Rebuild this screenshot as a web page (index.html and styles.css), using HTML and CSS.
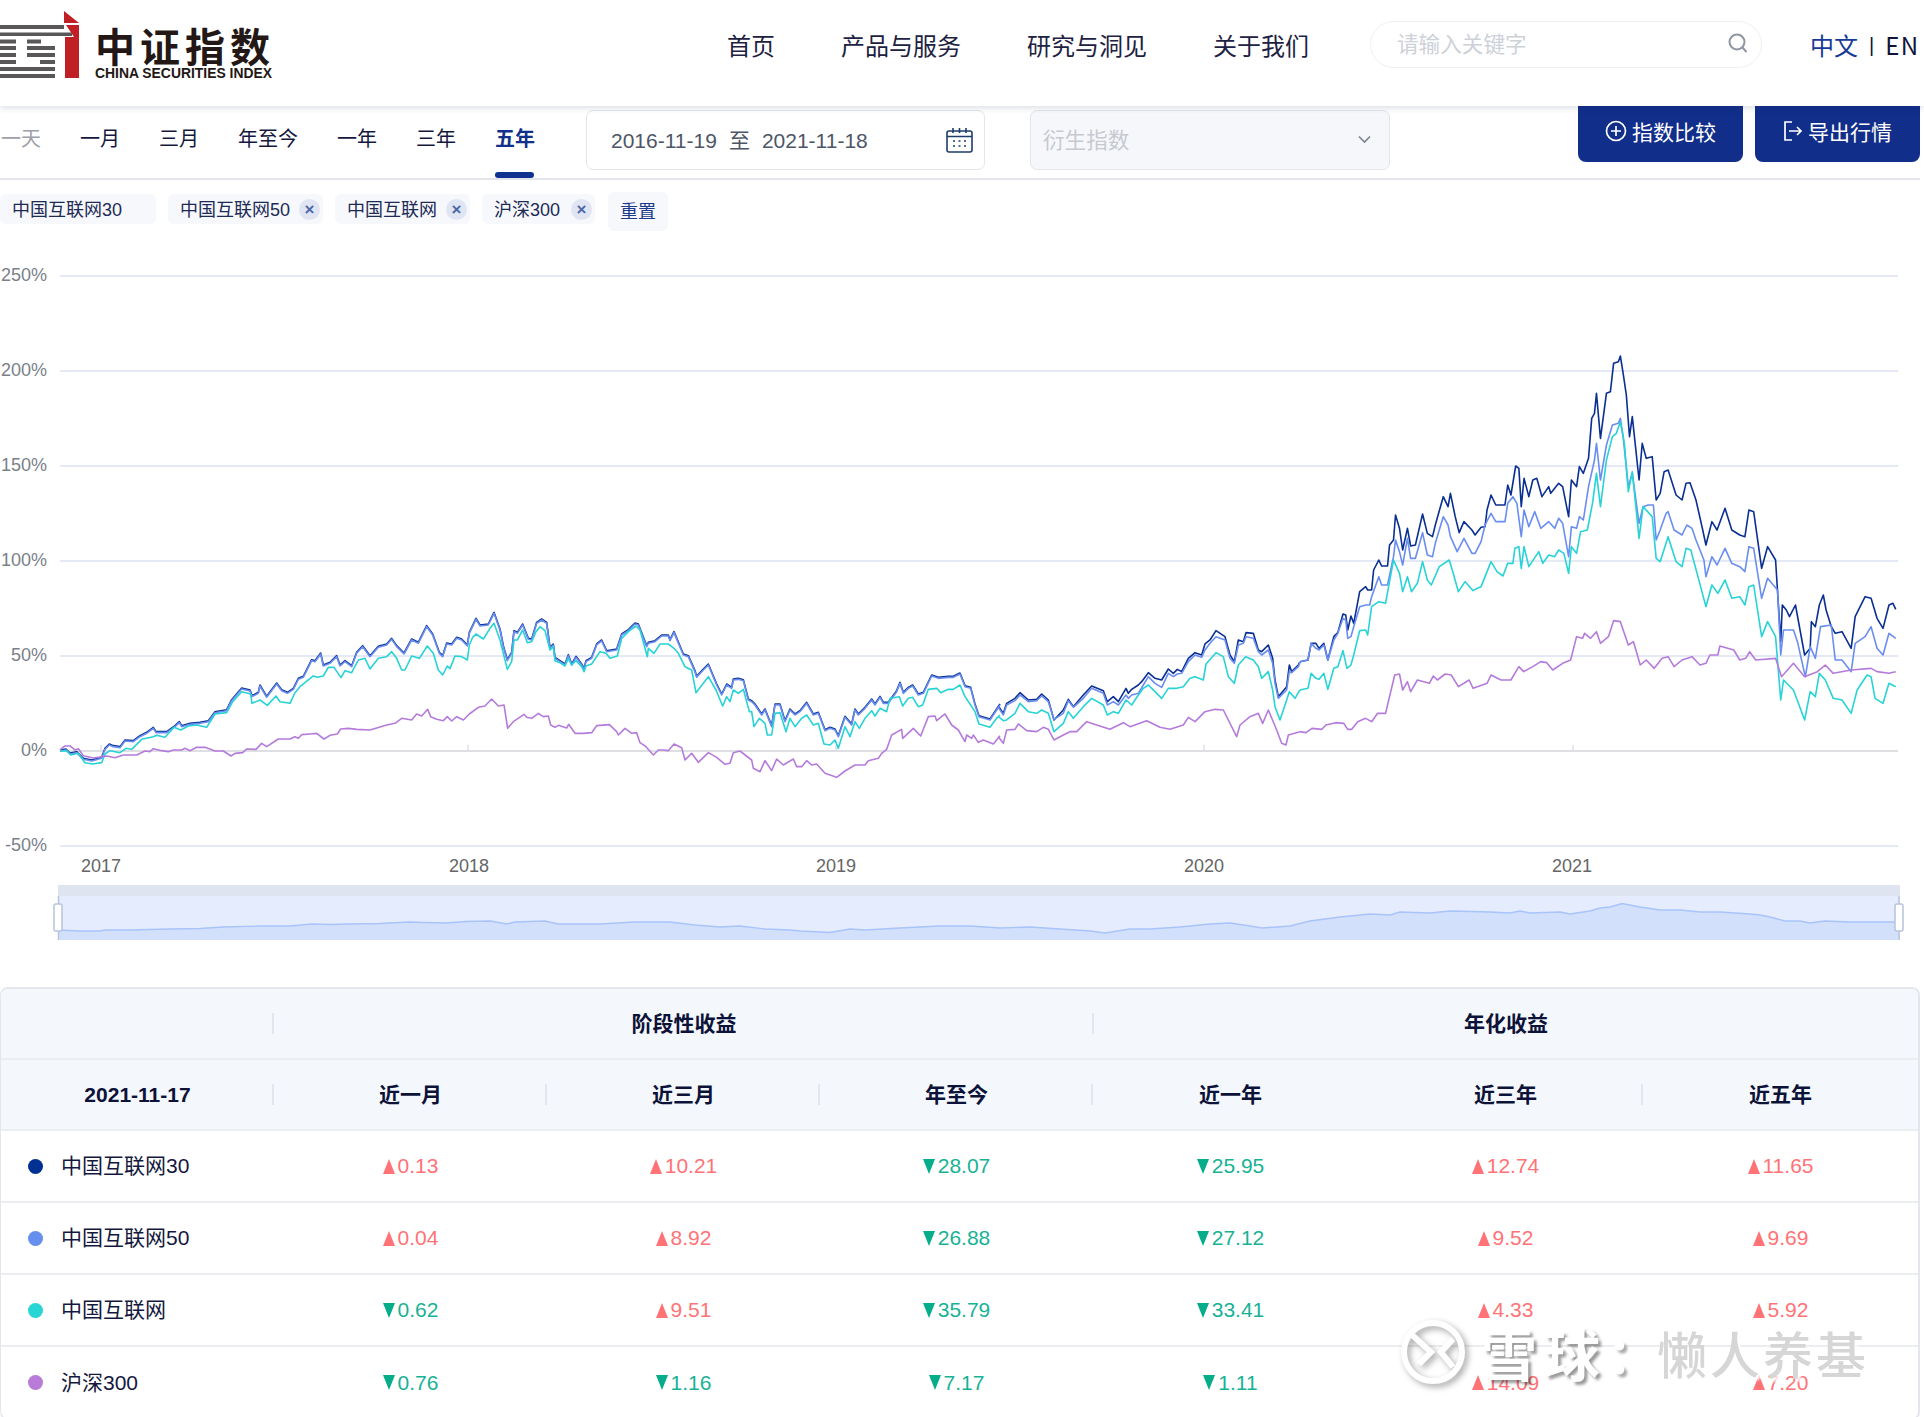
FILE: index.html
```html
<!DOCTYPE html>
<html lang="zh-CN">
<head>
<meta charset="utf-8">
<title>中证指数</title>
<link rel="stylesheet" href="styles.css">
</head>
<body>
<div class="page">
  <header class="topbar">
    <div class="brand">
      <svg class="brand-mark" width="80" height="80" viewBox="0 0 80 80">
        <g class="mark-grey">
          <rect x="0" y="25" width="64" height="4"/><rect x="0" y="32.5" width="72" height="3.5"/>
          <rect x="0" y="39.5" width="16" height="4"/><rect x="27" y="39.5" width="14" height="4"/>
          <rect x="0" y="46" width="16" height="4"/><rect x="27" y="46" width="28" height="4"/>
          <rect x="0" y="53" width="16" height="4"/><rect x="27" y="53" width="28" height="4"/>
          <rect x="0" y="60" width="16" height="4"/><rect x="40" y="60" width="15" height="4"/>
          <rect x="0" y="67" width="55" height="4"/><rect x="0" y="74" width="55" height="4"/>
        </g>
        <polygon class="mark-red" points="64,11 79,23 64,23"/>
        <polygon class="mark-red" points="66,25 79,25 79,78 65,78 65,37 74,37"/>
      </svg>
      <div class="brand-text">
        <div class="brand-cn">中证指数</div>
        <div class="brand-en">CHINA SECURITIES INDEX</div>
      </div>
    </div>
    <nav class="mainnav">
      <a>首页</a><a>产品与服务</a><a>研究与洞见</a><a>关于我们</a>
    </nav>
    <div class="search">
      <span class="search-ph">请输入关键字</span>
      <svg width="22" height="22" viewBox="0 0 22 22" class="search-ic"><circle cx="10" cy="10" r="7.5"/><path d="M15.5 15.5 L19.5 20"/></svg>
    </div>
    <div class="lang"><span class="lang-on">中文</span><span class="lang-sep">|</span><span class="lang-en">EN</span></div>
  </header>

  <section class="toolbar">
    <div class="tabs">
      <a class="tab tab-off">一天</a><a class="tab">一月</a><a class="tab">三月</a><a class="tab">年至今</a><a class="tab">一年</a><a class="tab">三年</a><a class="tab tab-on">五年</a>
    </div>
    <div class="datebox">
      <span>2016-11-19</span><span class="date-to">至</span><span>2021-11-18</span>
      <svg class="cal" width="27" height="26" viewBox="0 0 27 26"><rect x="1" y="4" width="25" height="21" rx="2"/><path d="M1 9.5H26M7 1V6M13.5 1V6M20 1V6"/><path class="cal-dots" d="M7 14h2M12.5 14h2M18 14h2M7 19h2M12.5 19h2M18 19h2"/></svg>
    </div>
    <div class="selectbox">
      <span>衍生指数</span>
      <svg width="13" height="9" viewBox="0 0 13 9" class="chev"><path d="M1 1.5 L6.5 7 L12 1.5"/></svg>
    </div>
    <div class="actions">
      <a class="btn"><svg width="22" height="22" viewBox="0 0 22 22" class="btn-ic"><circle cx="11" cy="11" r="9.5"/><path d="M11 6V16M6 11H16"/></svg>指数比较</a>
      <a class="btn"><svg width="20" height="22" viewBox="0 0 20 22" class="btn-ic"><path d="M9 2H2V20H9"/><path d="M6 11H18M14 7L18 11L14 15"/></svg>导出行情</a>
    </div>
  </section>

  <section class="tags">
    <span class="tag tag-first">中国互联网30</span>
    <span class="tag">中国互联网50<i class="tag-x">×</i></span>
    <span class="tag">中国互联网<i class="tag-x">×</i></span>
    <span class="tag tag-wide">沪深300<i class="tag-x">×</i></span>
    <span class="reset">重置</span>
  </section>

  <svg class="chart" width="1924" height="720" viewBox="0 240 1924 720">
    <defs>
      <polyline id="b8" class="ln" points="30,483 48,480 60,492 80,488 100,508 125,513 155,505 165,478 178,465 190,470 210,473 225,453 250,455 270,440 290,430 310,415 318,428 350,428 375,410 388,398 395,410 420,403 450,400 475,395 495,368 530,362 545,332 575,297 600,303 606,320 625,310 630,288 650,322 680,282 695,302 712,310 730,298 745,268 760,262 785,212 795,215 812,192 820,228 840,220 860,200 870,228 885,215 905,230 920,190 938,170 960,200 985,172 1010,165 1025,148 1040,170 1062,192 1085,150 1105,160 1130,110 1148,135 1168,190 1178,200 1190,162 1205,165 1220,145 1235,150 1252,168 1258,130 1278,88 1290,108 1315,105 1332,70 1350,120"/>
      <polyline id="b9" class="ln" points="0,120 10,170 22,212 35,190 42,125 52,130 68,105 85,148 95,150 110,100 125,90 140,100 150,175 160,165 165,205 180,215 195,225 205,197 215,225 228,202 245,225 252,238 258,215 275,205 290,165 305,153 320,185 350,180 365,135 385,122 405,102 415,105 440,170 445,160 465,155 485,138 505,138 510,152 522,128 550,195 565,200 585,245 590,262 610,240 625,225 650,285 665,315 680,285 695,295 700,270 715,268 730,272 745,330 755,335 765,345 785,375 795,360 815,410 825,345 840,345 855,395 870,360 885,375 900,365 920,340 940,375 955,370 975,422 990,415 1005,420 1015,440 1035,382 1055,405 1065,360 1075,375 1095,355 1115,330 1125,345 1140,322 1150,340 1165,340 1190,305 1200,280 1210,310 1225,295 1238,288 1255,315 1270,310 1295,258 1315,265 1345,262 1360,262 1380,252 1395,290 1412,295 1425,345 1437,380 1470,390 1490,360 1500,345"/>
    </defs>

    <g class="grid">
      <path d="M60 276H1898M60 371H1898M60 466H1898M60 561H1898M60 656H1898M60 846H1898"/>
    </g>
    <path class="zero" d="M60 751H1898"/>
    <path class="ticks" d="M101 745V751M468 745V751M836 745V751M1204 745V751M1573 745V751"/>

    <g class="ylabels">
      <text x="47" y="281">250%</text><text x="47" y="376">200%</text><text x="47" y="471">150%</text><text x="47" y="566">100%</text><text x="47" y="661">50%</text><text x="47" y="756">0%</text><text x="47" y="851">-50%</text>
    </g>
    <g class="xlabels">
      <text x="101" y="872">2017</text><text x="469" y="872">2018</text><text x="836" y="872">2019</text><text x="1204" y="872">2020</text><text x="1572" y="872">2021</text>
    </g>

    <g class="s-dark">
      <use href="#b8" transform="translate(50,589) scale(.33333)"/>
      <use href="#b9" transform="translate(500,589) scale(.33333)"/>
      <polyline class="ln" transform="translate(900,450) scale(.33333)" points="295,768 310,790 320,760 345,745 360,728 385,750 410,748 425,732 445,750 462,810 490,780 505,748 520,770 550,735 575,708 610,722 622,755 640,740 655,755 678,715 685,730 695,718 715,705 725,695 745,668 765,685 785,690 805,657 820,670 832,658 845,665 865,625 885,608 905,615 915,582 930,570 948,542 975,560 990,615 1003,635 1015,570 1030,575 1038,548 1060,550 1075,600 1085,605 1105,585 1118,625 1125,690 1135,740 1160,710 1168,645 1175,665 1195,645 1200,636"/>
      <polyline class="ln" transform="translate(1300,340) scale(.39796,.33333)" points="0,965 20,960 28,910 40,910 48,925 60,910 70,960 85,890 95,878 108,822 115,825 120,870 128,828 135,850 150,755 165,740 170,750 180,750 185,690 198,660 205,678 220,678 225,615 235,600 240,525 250,565 258,630 270,565 278,618 290,615 308,522 320,580 333,590 340,555 360,470 372,500 378,460 390,530 400,578 412,545 432,570 440,585 455,562 465,560 470,510 480,465 492,495 515,495 522,435 530,465 542,378 550,385 556,500 563,415 575,470 585,420 595,415 608,470 625,440 630,460 650,430 660,440 675,530 682,420 695,440 702,380 712,400 725,355 733,235 740,220 745,160 755,295 770,160 780,155 788,70 800,65 805,48 812,100 820,165 828,290 835,230 852,420 860,310 870,355 885,350 895,480 905,460 915,395 925,390 945,465 960,480 970,430 980,428 995,480 1012,570 1020,615 1035,545 1048,570 1068,505 1085,570 1105,585 1118,590 1128,510 1140,515 1160,685 1175,620 1195,660 1208,905 1212,795 1222,810 1230,830 1245,795 1268,945 1282,925 1285,845 1295,860 1305,795 1315,765 1322,810 1335,860 1345,880 1362,875 1385,925 1395,830 1420,770 1435,775 1450,835 1465,865 1480,795 1490,790 1497,808"/>
    </g>
    <g class="s-med">
      <use href="#b8" transform="translate(50,590) scale(.33333)"/>
      <use href="#b9" transform="translate(500,590) scale(.33333)"/>
      <polyline class="ln" transform="translate(900,450) scale(.33333)" points="295,772 310,795 320,765 345,752 360,735 385,755 410,752 425,738 445,755 462,808 490,790 505,752 520,772 550,745 575,715 610,730 622,765 640,755 655,765 678,735 685,745 695,735 715,730 730,705 745,680 765,700 785,712 805,670 820,680 832,672 845,670 865,635 885,615 905,622 915,600 930,580 948,560 975,570 990,625 1003,640 1015,585 1030,580 1038,560 1060,565 1075,605 1085,615 1105,600 1118,640 1125,700 1135,745 1160,720 1168,665 1175,668 1195,650 1200,636"/>
      <polyline class="ln" transform="translate(1300,340) scale(.39796,.33333)" points="0,965 20,960 28,910 40,925 48,930 60,915 70,960 85,900 95,880 108,835 115,840 120,895 128,890 135,860 150,800 165,795 175,795 180,770 198,710 205,735 220,735 235,650 240,600 250,635 258,675 270,595 278,655 290,655 308,578 320,645 333,650 340,610 360,530 372,555 378,590 395,635 412,595 432,640 440,640 455,605 465,555 480,520 492,545 515,545 522,490 535,470 545,490 556,590 563,510 575,560 590,515 605,565 625,545 640,565 650,535 660,550 675,650 682,560 695,565 702,530 712,540 725,440 740,360 745,310 755,420 770,315 785,255 800,250 805,235 812,290 825,440 835,400 852,550 862,500 875,495 888,495 895,600 905,570 920,520 925,515 940,570 960,585 972,555 985,565 995,600 1015,660 1020,710 1035,650 1048,675 1068,625 1085,670 1105,680 1118,695 1128,620 1140,625 1160,775 1175,715 1200,750 1208,945 1215,870 1240,870 1250,905 1265,985 1270,1010 1282,920 1295,955 1308,860 1335,855 1345,960 1362,960 1385,995 1395,910 1420,890 1435,860 1450,925 1465,945 1480,880 1497,895"/>
    </g>
    <g class="s-cyan">
      <polyline class="ln" transform="translate(50,590) scale(.33333)" points="30,483 50,482 62,495 85,490 105,518 128,522 155,518 165,492 180,482 210,488 228,475 245,478 275,448 310,440 320,436 345,442 372,412 392,420 415,408 440,405 470,412 495,372 530,368 548,335 575,305 602,312 606,340 630,330 652,346 678,318 690,335 720,340 735,308 750,290 775,270 790,258 803,262 820,258 835,232 852,232 873,263 885,242 905,248 925,210 945,205 960,237 985,205 1010,200 1025,185 1040,205 1055,240 1065,240 1085,198 1108,205 1132,168 1150,190 1165,240 1178,255 1192,228 1200,236 1215,198 1235,200 1252,210 1258,165 1268,142 1278,132 1300,147 1320,115 1332,100 1350,150"/>
      <polyline class="ln" transform="translate(500,590) scale(.33333)" points="0,150 10,190 22,238 35,215 42,150 52,150 68,120 82,158 95,155 108,125 120,110 135,122 150,180 160,170 165,212 180,218 195,228 205,205 215,225 228,212 245,230 252,245 258,228 275,222 300,185 318,190 330,205 352,198 365,145 385,125 408,108 420,120 442,200 445,175 462,190 480,162 505,162 522,175 535,190 555,230 575,240 588,308 610,280 625,260 648,300 668,348 680,320 690,335 700,300 715,310 730,298 748,365 755,365 762,410 778,385 795,400 802,435 815,435 825,370 840,368 858,425 870,385 885,410 905,385 920,375 940,405 955,400 972,462 990,465 1005,450 1015,475 1035,410 1050,440 1065,395 1078,415 1095,385 1115,362 1125,378 1140,355 1160,365 1170,325 1198,320 1208,348 1225,325 1238,322 1255,350 1268,345 1285,298 1310,295 1322,308 1345,298 1360,298 1380,285 1395,320 1412,345 1425,365 1437,402 1470,412 1490,385 1500,375"/>
      <polyline class="ln" transform="translate(900,450) scale(.33333)" points="295,800 310,812 320,810 345,790 360,760 385,785 410,790 425,780 445,790 462,845 490,820 505,785 520,805 550,770 575,745 610,765 622,795 640,785 655,790 678,750 695,765 715,735 730,715 745,705 765,725 785,745 805,715 830,715 850,710 870,685 885,680 910,690 918,642 948,608 970,620 985,680 1003,700 1015,645 1037,620 1060,630 1075,650 1085,685 1105,665 1118,720 1125,770 1140,810 1160,750 1168,725 1185,745 1195,728 1200,720"/>
      <polyline class="ln" transform="translate(1300,340) scale(.39796,.33333)" points="0,1050 20,1045 28,1000 40,1015 48,1018 60,1000 70,1048 85,985 95,980 108,932 118,985 128,975 135,945 150,872 165,870 170,885 180,800 198,785 215,790 225,725 235,660 250,700 258,755 270,710 280,755 295,730 308,665 320,720 330,735 350,680 375,660 385,700 398,755 415,725 435,752 445,745 455,740 470,695 480,665 495,695 510,708 522,670 535,670 540,625 550,620 556,685 563,620 575,680 600,635 610,670 625,645 640,650 650,630 663,640 675,700 682,620 695,640 705,575 722,570 735,490 745,400 755,500 770,360 785,290 795,280 805,245 815,310 825,455 835,395 852,595 862,500 885,530 895,655 905,665 925,590 945,665 960,680 970,625 982,630 1000,710 1020,800 1035,735 1050,760 1068,720 1085,775 1105,770 1118,795 1128,740 1140,735 1160,890 1175,845 1195,890 1208,1080 1215,1020 1240,1050 1268,1140 1282,1055 1295,1070 1305,1000 1320,1020 1340,1075 1362,1080 1385,1120 1400,1050 1425,1005 1435,1010 1445,1075 1465,1090 1480,1030 1497,1040"/>
    </g>
    <g class="s-purple">
      <polyline class="ln" transform="translate(50,590) scale(.33333)" points="30,480 45,468 60,468 75,480 85,476 100,497 130,504 155,500 170,498 195,503 220,495 260,495 285,483 300,485 310,476 335,482 355,485 370,480 395,480 405,475 420,482 440,472 465,472 495,483 520,483 543,498 555,490 578,488 590,477 618,478 635,460 650,470 685,447 720,447 735,440 745,445 755,434 780,432 800,430 822,447 840,436 862,432 872,417 895,415 920,418 960,420 1010,405 1035,400 1055,385 1085,390 1100,372 1115,378 1133,358 1142,380 1160,388 1180,392 1192,380 1205,393 1220,380 1240,390 1258,372 1285,352 1305,348 1325,327 1345,348 1350,347"/>
      <polyline class="ln" transform="translate(500,590) scale(.33333)" points="0,347 12,345 23,415 40,395 72,373 80,382 95,385 115,370 130,380 145,378 152,405 165,412 175,406 200,414 206,403 225,430 250,430 275,428 290,407 328,404 350,425 355,435 375,415 395,430 410,428 420,458 438,470 460,495 475,480 490,480 505,482 522,462 545,473 555,510 575,490 595,517 625,488 650,502 675,523 690,520 700,488 720,483 755,510 760,535 780,545 795,512 815,542 830,507 850,525 880,507 890,530 905,530 920,512 935,525 950,522 975,550 1010,562 1035,543 1065,525 1095,525 1105,512 1135,505 1145,490 1160,478 1175,435 1205,418 1208,445 1240,415 1262,438 1285,380 1305,378 1310,392 1335,372 1355,405 1375,420 1395,455 1400,435 1415,445 1420,435 1435,457 1450,450 1480,462 1500,437"/>
      <polyline class="ln" transform="translate(900,450) scale(.33333)" points="295,860 310,880 320,840 345,838 355,822 380,842 410,845 430,832 445,838 462,870 490,855 510,845 530,845 560,815 590,825 630,838 670,818 690,830 740,812 780,832 810,838 850,825 865,802 885,815 915,785 945,778 970,780 1010,860 1020,825 1050,800 1075,790 1088,820 1105,780 1130,840 1145,880 1158,885 1165,855 1200,845"/>
      <polyline class="ln" transform="translate(1300,340) scale(.39796,.33333)" points="0,1175 15,1178 30,1165 55,1168 65,1155 90,1148 110,1150 120,1168 130,1168 145,1145 165,1135 180,1145 195,1120 215,1120 238,1005 250,1002 258,1050 270,1025 278,1055 295,1020 325,1030 335,1008 345,1020 365,1002 380,1005 398,1040 425,1020 435,1045 470,1030 480,1005 505,1020 530,1020 550,980 562,995 585,980 605,965 620,968 635,990 660,970 680,960 695,890 710,895 715,880 730,895 745,875 755,910 775,890 788,842 805,845 825,915 838,905 855,975 870,960 890,985 910,955 925,950 940,980 960,960 985,950 1005,975 1020,970 1030,945 1050,945 1055,918 1090,930 1105,960 1120,955 1130,935 1145,960 1195,955 1210,1010 1240,970 1268,1010 1300,995 1320,975 1340,1000 1385,990 1435,985 1450,995 1480,1000 1497,995"/>
    </g>

    <rect class="mini-head" x="58" y="885" width="1842" height="11"/>
    <rect class="mini-bg" x="58" y="896" width="1842" height="44"/>
    <polygon class="mini-area" points="58,930 80,931 100,931 105,930 130,930 170,929 200,928.5 223,927 260,926 290,926 312,924 330,924.5 350,924 380,923.5 410,922 424,922.5 446,923 466,921.5 490,921 507,924 515,922 545,921 558,924 575,924 600,924 635,922 670,922 695,925 720,927 740,926 765,929 790,930 800,931 830,932.5 850,929 865,930 900,928 940,926 970,926 1000,928 1030,927 1060,929 1090,931 1105,933 1130,929 1150,929 1180,927 1210,924 1230,923 1250,926 1262,928 1290,926 1310,921 1340,917 1370,914 1390,915 1400,912 1430,913 1450,911 1490,912 1510,913 1520,911 1530,913 1560,912 1570,914 1590,911 1600,908 1610,907 1622,903.5 1640,907 1660,910 1680,910 1700,912 1720,912 1750,914 1760,915 1770,917 1785,921 1800,921 1810,923 1825,921 1850,922 1870,922 1896,922 1899,940 58,940"/>
    <polyline class="mini-line" points="58,930 80,931 100,931 105,930 130,930 170,929 200,928.5 223,927 260,926 290,926 312,924 330,924.5 350,924 380,923.5 410,922 424,922.5 446,923 466,921.5 490,921 507,924 515,922 545,921 558,924 575,924 600,924 635,922 670,922 695,925 720,927 740,926 765,929 790,930 800,931 830,932.5 850,929 865,930 900,928 940,926 970,926 1000,928 1030,927 1060,929 1090,931 1105,933 1130,929 1150,929 1180,927 1210,924 1230,923 1250,926 1262,928 1290,926 1310,921 1340,917 1370,914 1390,915 1400,912 1430,913 1450,911 1490,912 1510,913 1520,911 1530,913 1560,912 1570,914 1590,911 1600,908 1610,907 1622,903.5 1640,907 1660,910 1680,910 1700,912 1720,912 1750,914 1760,915 1770,917 1785,921 1800,921 1810,923 1825,921 1850,922 1870,922 1896,922"/>
    <path class="mini-edge" d="M58.5 896V940M1899 896V940"/>
    <rect class="mini-handle" x="54" y="904" width="8" height="27" rx="2"/>
    <rect class="mini-handle" x="1895" y="904" width="8" height="27" rx="2"/>
  </svg>

  <section class="table">
    <div class="trow thead group">
      <div class="cell"><i class="divider"></i></div>
      <div class="cell">阶段性收益<i class="divider"></i></div>
      <div class="cell">年化收益</div>
    </div>
    <div class="trow thead headrow">
      <div class="cell">2021-11-17<i class="divider"></i></div>
      <div class="cell">近一月<i class="divider"></i></div>
      <div class="cell">近三月<i class="divider"></i></div>
      <div class="cell">年至今<i class="divider"></i></div>
      <div class="cell">近一年</div>
      <div class="cell">近三年<i class="divider"></i></div>
      <div class="cell">近五年</div>
    </div>
    <div class="trow tbody">
      <div class="name"><i class="dot dot-a"></i>中国互联网30</div>
      <div class="cell up">0.13</div><div class="cell up">10.21</div><div class="cell down">28.07</div><div class="cell down">25.95</div><div class="cell up">12.74</div><div class="cell up">11.65</div>
    </div>
    <div class="trow tbody">
      <div class="name"><i class="dot dot-b"></i>中国互联网50</div>
      <div class="cell up">0.04</div><div class="cell up">8.92</div><div class="cell down">26.88</div><div class="cell down">27.12</div><div class="cell up">9.52</div><div class="cell up">9.69</div>
    </div>
    <div class="trow tbody">
      <div class="name"><i class="dot dot-c"></i>中国互联网</div>
      <div class="cell down">0.62</div><div class="cell up">9.51</div><div class="cell down">35.79</div><div class="cell down">33.41</div><div class="cell up">4.33</div><div class="cell up">5.92</div>
    </div>
    <div class="trow tbody last">
      <div class="name"><i class="dot dot-d"></i>沪深300</div>
      <div class="cell down">0.76</div><div class="cell down">1.16</div><div class="cell down">7.17</div><div class="cell down">1.11</div><div class="cell up">14.09</div><div class="cell up">7.20</div>
    </div>
  </section>

  <div class="watermark">
    <svg class="wm-logo" width="72" height="72" viewBox="0 0 72 72"><circle cx="36" cy="36" r="29"/><path d="M14 18 L34 36 L22 48 M56 23 L44 36 L56 51"/></svg>
    <span class="wm-a">雪球</span><span class="wm-c">：</span><span class="wm-b">懒人养基</span>
  </div>
</div>
</body>
</html>
```

FILE: styles.css
```css
* { box-sizing: border-box; }
html, body { margin: 0; padding: 0; background: #fff; }
body { font-family: "Liberation Sans", "Noto Sans CJK SC", sans-serif; color: #1a1f44; }
.page { position: relative; width: 1924px; height: 1417px; overflow: hidden; }

/* header */
.topbar { position: relative; z-index: 2; display: flex; align-items: flex-start; height: 106px; background: #fff; box-shadow: 0 2px 6px rgba(40, 50, 90, .16); }
.brand { display: flex; width: 727px; flex: none; }
.brand-mark { flex: none; }
.mark-grey { fill: #595757; }
.mark-red { fill: #c01f25; }
.brand-text { margin: 25px 0 0 15px; width: 180px; }
.brand-cn { font: 700 40px/40px "Noto Sans CJK SC", sans-serif; letter-spacing: 5px; color: #231815; white-space: nowrap; }
.brand-en { margin-top: 2px; font: 700 13.9px/13px "Liberation Sans", sans-serif; color: #231815; white-space: nowrap; }
.mainnav { display: flex; gap: 66px; width: 643px; flex: none; padding-top: 28px; font: 400 24px/34px "Noto Sans CJK SC", sans-serif; color: #1d2142; }
.search { display: flex; align-items: center; justify-content: space-between; width: 392px; height: 47px; margin-top: 21px; padding: 0 12px 3px 26px; border: 1.5px solid #eff0f4; border-radius: 24px; flex: none; }
.search-ph { font: 400 21.6px/30px "Noto Sans CJK SC", sans-serif; color: #ced1d8; }
.search-ic { fill: none; stroke: #8f95a1; stroke-width: 2; }
.lang { display: flex; align-items: center; margin: 28px 0 0 48px; font: 400 24px/34px "Noto Sans CJK SC", sans-serif; color: #10143a; white-space: nowrap; }
.lang-on { color: #173a96; }
.lang-sep { margin: 0 11px; font-family: "Liberation Sans", sans-serif; font-size: 20px; }
.lang-en { letter-spacing: 1.5px; }

/* toolbar */
.toolbar { display: flex; align-items: flex-start; width: 1920px; height: 74px; border-bottom: 2px solid #e3e5ea; }
.tabs { display: flex; gap: 39px; height: 72px; padding-left: 1px; }
.tab { position: relative; padding-top: 17px; font: 400 20px/30px "Noto Sans CJK SC", sans-serif; color: #14183e; white-space: nowrap; }
.tab-off { color: #9da0a8; }
.tab-on { font-weight: 700; color: #11318b; }
.tab-on::after { content: ""; position: absolute; left: 0; right: 1px; top: 66px; height: 6px; border-radius: 3px; background: #0f318f; }
.datebox { display: flex; align-items: center; width: 399px; height: 60px; margin: 4px 0 0 51px; padding: 2px 11px 0 24px; border: 1.5px solid #e3e5ea; border-radius: 7px; font: 400 21px/28px "Liberation Sans", "Noto Sans CJK SC", sans-serif; color: #4d5566; white-space: nowrap; }
.date-to { margin: 0 12px; }
.cal { margin-left: auto; margin-top: -2px; fill: none; stroke: #1f3d6b; stroke-width: 1.6; }
.cal-dots { stroke-width: 1.6; }
.selectbox { display: flex; align-items: center; justify-content: space-between; width: 360px; height: 60px; margin: 4px 0 0 45px; padding: 0 18px 2px 12px; border: 1.5px solid #e3e5ea; border-radius: 7px; background: #f6f7fb; font: 400 21.6px/28px "Noto Sans CJK SC", sans-serif; color: #c6c9d0; }
.chev { fill: none; stroke: #7d828e; stroke-width: 1.6; }
.actions { display: flex; gap: 12px; margin-left: auto; }
.btn { display: flex; align-items: center; justify-content: center; gap: 5px; width: 165px; height: 56px; padding-bottom: 6px; border-radius: 0 0 8px 8px; background: #112e8a; color: #fff; font: 400 21px/28px "Noto Sans CJK SC", sans-serif; white-space: nowrap; }
.btn-ic { fill: none; stroke: #fff; stroke-width: 1.7; flex: none; }

/* tags */
.tags { display: flex; align-items: flex-start; gap: 12px; height: 60px; padding-top: 14px; }
.tag { display: flex; align-items: center; height: 30px; padding: 3px 3px 0 12px; border-radius: 6px; background: #f6f8fc; font: 400 18px/27px "Liberation Sans", "Noto Sans CJK SC", sans-serif; color: #1d2a55; white-space: nowrap; }
.tag-first { width: 156px; }
.tag-wide .tag-x { margin-left: 11px; }
.tag-x { display: flex; align-items: center; justify-content: center; width: 21px; height: 21px; margin: -3px 0 0 9px; border-radius: 50%; background: #dfe5f2; color: #4d66aa; font: 700 17px/21px "Liberation Sans", sans-serif; }
.reset { display: flex; align-items: center; justify-content: center; width: 60px; height: 39px; margin: -2px 0 0 1px; padding-bottom: 4px; border-radius: 6px; background: #f6f8fc; font: 400 18px/30px "Noto Sans CJK SC", sans-serif; color: #1d3a8c; }

/* chart */
.chart { display: block; }
.grid path { fill: none; stroke: #e5e9f5; stroke-width: 2; }
.zero { fill: none; stroke: #dedfe2; stroke-width: 2; }
.ticks { fill: none; stroke: #dedfe2; stroke-width: 1.5; }
.ylabels text { font: 400 18px "Liberation Sans", sans-serif; fill: #7b7f8a; text-anchor: end; }
.xlabels text { font: 400 18px "Liberation Sans", sans-serif; fill: #666; text-anchor: middle; }
.ln { fill: none; stroke-width: 1.6; vector-effect: non-scaling-stroke; stroke-linejoin: round; }
.s-dark { stroke: #0a2f92; }
.s-med { stroke: #6a8ef0; }
.s-cyan { stroke: #27d3d6; }
.s-purple { stroke: #b57bdb; }
.mini-head { fill: #dfe4f1; }
.mini-bg { fill: #e5ecfd; }
.mini-area { fill: #d2e0fb; }
.mini-line { fill: none; stroke: #a9c3fb; stroke-width: 1.4; }
.mini-edge { fill: none; stroke: #b8c4dd; stroke-width: 1.5; }
.mini-handle { fill: #fff; stroke: #b8c4dd; stroke-width: 1.5; }

/* table */
.table { width: 1920px; margin-top: 27px; border: 2px solid #e3e6ec; border-left-width: 1px; border-radius: 8px; overflow: hidden; }
.trow { display: grid; grid-template-columns: repeat(4, 273px) repeat(3, 1fr); height: 72px; border-bottom: 2px solid #ebedf1; }
.tbody.last { border-bottom: 0; height: 71px; }
.thead { background: #f4f7fc; font: 700 21px/28px "Liberation Sans", "Noto Sans CJK SC", sans-serif; color: #0c1238; }
.group { grid-template-columns: 273px 820px 1fr; height: 71px; }
.headrow { height: 71px; }
.cell { position: relative; display: flex; align-items: center; justify-content: center; }
.divider { position: absolute; right: 0; top: 50%; width: 2px; height: 21px; margin-top: -11px; background: #e3e6ec; }
.tbody { font-size: 21px; }
.name { display: flex; align-items: center; padding-left: 27px; color: #14183e; font: 400 21px/30px "Liberation Sans", "Noto Sans CJK SC", sans-serif; white-space: nowrap; }
.dot { width: 15px; height: 15px; margin-right: 18px; border-radius: 50%; }
.dot-a { background: #003192; }
.dot-b { background: #6690ee; }
.dot-c { background: #27d5d5; }
.dot-d { background: #b87bd7; }
.up { color: #ff7276; }
.down { color: #17b294; }
.up::before, .down::before { content: ""; width: 0; height: 0; margin-right: 3px; border-left: 6px solid transparent; border-right: 6px solid transparent; }
.up::before { border-bottom: 15px solid #ff7276; }
.down::before { border-top: 15px solid #05ad8a; }

/* watermark */
.watermark { position: absolute; left: 1397px; top: 1316px; display: flex; align-items: center; height: 72px; white-space: nowrap; font-family: "Noto Sans CJK SC", sans-serif; }
.wm-logo { flex: none; margin-right: 12px; fill: none; stroke: #fff; stroke-width: 6; filter: drop-shadow(3px 3px 3px rgba(0,0,0,.35)); }
.wm-a { font: 700 56px/72px "Noto Sans CJK SC", sans-serif; letter-spacing: 7px; color: #fff; text-shadow: 3px 3px 3px rgba(0,0,0,.4); }
.wm-c { width: 50px; font: 700 50px/72px "Noto Sans CJK SC", sans-serif; color: #fff; text-shadow: 3px 3px 3px rgba(0,0,0,.35); }
.wm-b { font: 500 50px/72px "Noto Sans CJK SC", sans-serif; letter-spacing: 3px; color: #d6d6d6; text-shadow: 3px 3px 2px rgba(255,255,255,.8); }
```
